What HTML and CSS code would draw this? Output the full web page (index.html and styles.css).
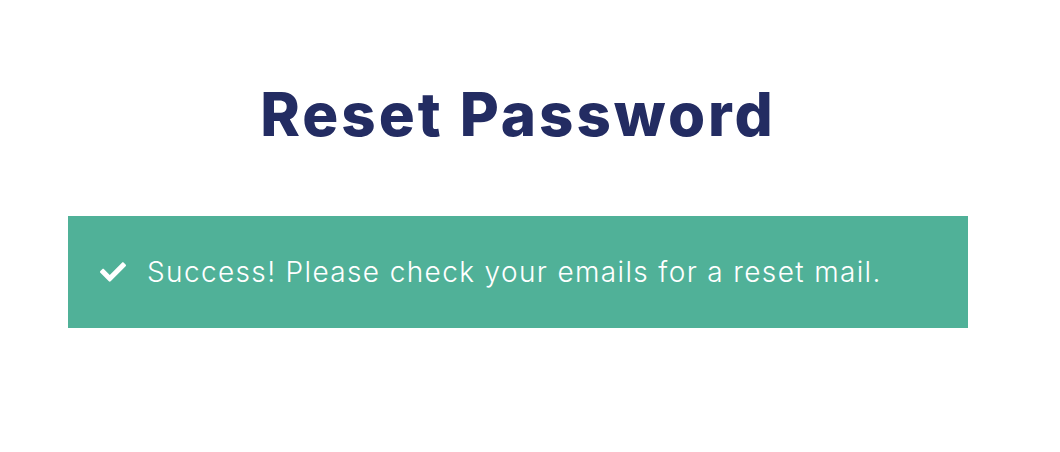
FILE: index.html
```html
<!DOCTYPE html>
<html lang="en">
<head>
<meta charset="utf-8">
<title>Reset Password</title>
<link rel="stylesheet" href="styles.css">
</head>
<body>
<main class="page">
  <h1 class="title">Reset Password</h1>
  <div class="alert">
    <svg class="alert-icon" viewBox="0 0 512 512" aria-hidden="true"><path d="M173.898 439.404l-166.4-166.4c-9.997-9.997-9.997-26.206 0-36.204l36.203-36.204c9.997-9.998 26.207-9.998 36.204 0L192 312.69 432.095 72.596c9.997-9.997 26.207-9.997 36.204 0l36.203 36.204c9.997 9.997 9.997 26.206 0 36.204l-294.4 294.401c-9.998 9.997-26.207 9.997-36.204-.001z"/></svg>
    <span class="alert-text">Success! Please check your emails for a reset mail.</span>
  </div>
</main>
</body>
</html>
```

FILE: styles.css
```css
html, body {
  margin: 0;
  padding: 0;
  background: #ffffff;
}

.page {
  width: 900px;
  margin-left: 68px;
  padding-top: 78px;
}

.title {
  margin: 0;
  font-family: "Inter", "Liberation Sans", sans-serif;
  font-weight: 800;
  font-size: 60px;
  line-height: 72px;
  letter-spacing: 3px;
  color: #232c62;
  text-align: center;
}

.alert {
  margin-top: 66px;
  height: 112px;
  box-sizing: border-box;
  background: #50b198;
  display: flex;
  align-items: center;
  padding-left: 32px;
  gap: 21px;
}

.alert-icon {
  width: 26px;
  height: 26px;
  fill: #ffffff;
  flex: none;
}

.alert-text {
  font-family: "Inter", "Liberation Sans", sans-serif;
  font-weight: 300;
  font-size: 28px;
  letter-spacing: 1.36px;
  color: #ffffff;
}
```
